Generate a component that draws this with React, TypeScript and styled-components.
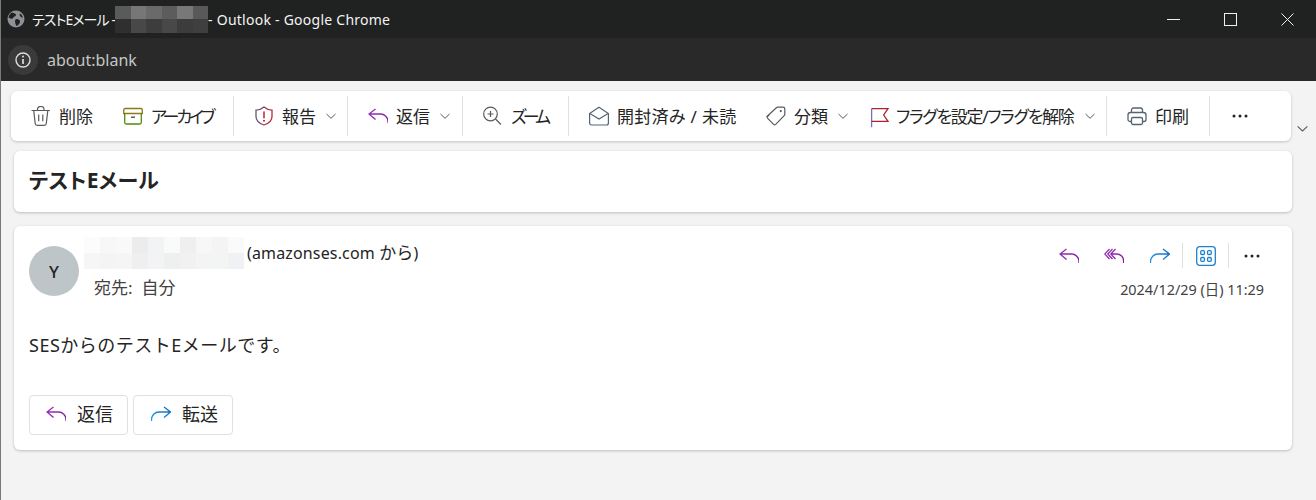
import React from "react";
import styled, { createGlobalStyle } from "styled-components";

const Global = createGlobalStyle`
  html, body { margin: 0; padding: 0; background: #f3f3f3; }
  body { font-family: "Noto Sans", "Noto Sans CJK JP", sans-serif; color: #242424; }
`;

const Page = styled.div`
  width: 1316px;
  height: 500px;
  overflow: hidden;
  background: #f3f3f3;
  border-left: 1px solid #7a7a7a;
  box-sizing: border-box;
  display: flex;
  flex-direction: column;
`;

const TitleBar = styled.div`
  height: 38px;
  flex: none;
  background: #202121;
  display: flex;
  align-items: center;
  color: #f4f4f4;
  font-size: 14px;
  padding-left: 6px;
`;
const TitleText = styled.span<{ $ls: number; $ml: number }>`
  margin-left: ${(p) => p.$ml}px;
  white-space: nowrap;
  font-feature-settings: "palt";
  letter-spacing: ${(p) => p.$ls}px;
`;
const Mosaic = styled.div<{ $cols: number; $cw: number; $ch: number }>`
  display: grid;
  grid-template-columns: repeat(${(p) => p.$cols}, ${(p) => p.$cw}px);
  grid-auto-rows: ${(p) => p.$ch}px;
  flex: none;
`;
const Cell = styled.div<{ $c: string }>`
  background: ${(p) => p.$c};
`;
const WindowButtons = styled.div`
  margin-left: auto;
  display: flex;
  align-items: center;
`;
const WindowButton = styled.div`
  width: 57px;
  height: 38px;
  display: flex;
  align-items: center;
  justify-content: center;
`;

const AddressBar = styled.div`
  height: 43px;
  flex: none;
  background: #292929;
  display: flex;
  align-items: center;
  padding-left: 7px;
  color: #c4c7c5;
  font-size: 16px;
`;
const InfoChip = styled.div`
  width: 30px;
  height: 30px;
  border-radius: 50%;
  background: #3a3a3a;
  display: flex;
  align-items: center;
  justify-content: center;
  margin-right: 9px;
`;

const ToolbarRow = styled.div`
  display: flex;
  align-items: flex-start;
  margin: 10px 0 0 10px;
`;
const Toolbar = styled.div`
  width: 1280px;
  height: 50px;
  box-sizing: border-box;
  background: #fff;
  border-radius: 6px;
  box-shadow: 0 1px 3px rgba(0, 0, 0, 0.2);
  display: flex;
  align-items: center;
  padding-left: 10px;
  font-size: 17px;
  font-feature-settings: "palt";
`;
const Item = styled.div<{ $mr?: number }>`
  display: flex;
  align-items: center;
  padding: 0 10px;
  margin-right: ${(p) => p.$mr ?? 0}px;
  white-space: nowrap;
`;
const IconSlot = styled.span`
  width: 20px;
  height: 20px;
  flex: none;
  display: block;
  margin-right: 8px;
  svg { display: block; }
`;
const Label = styled.span<{ $w: number; $ls?: number }>`
  display: block;
  width: ${(p) => p.$w}px;
  margin-top: -2px;
  letter-spacing: ${(p) => p.$ls ?? 0}px;
`;
const Caret = styled.span`
  display: block;
  margin-left: 9px;
  width: 12px;
  height: 12px;
  svg { display: block; }
`;
const Divider = styled.div<{ $mr?: number }>`
  width: 1px;
  height: 40px;
  flex: none;
  background: #e0e0e0;
  margin-right: ${(p) => p.$mr ?? 10}px;
`;
const Overflow = styled.div`
  margin: 31px 0 0 5px;
  svg { display: block; }
`;

const Card = styled.div`
  margin: 0 0 0 13px;
  width: 1278px;
  box-sizing: border-box;
  background: #fff;
  border-radius: 6px;
  box-shadow: 0 1px 3px rgba(0, 0, 0, 0.22);
`;
const SubjectCard = styled(Card)`
  margin-top: 10px;
  height: 61px;
  display: flex;
  align-items: center;
  padding: 0 0 6px 15px;
  font-size: 21px;
  font-weight: 700;
  letter-spacing: 0.3px;
  font-feature-settings: "palt";
`;
const MessageCard = styled(Card)`
  margin-top: 14px;
  height: 224px;
  padding: 11px 15px 0 15px;
  display: flex;
  flex-direction: column;
`;
const Header = styled.div`
  display: flex;
  height: 73px;
  flex: none;
`;
const Avatar = styled.div`
  width: 50px;
  height: 50px;
  margin-top: 9px;
  border-radius: 50%;
  background: #bec5c9;
  flex: none;
  display: flex;
  align-items: center;
  justify-content: center;
  font-size: 17px;
  font-weight: 500;
  color: #242424;
`;
const Who = styled.div`
  margin-left: 5px;
  display: flex;
  flex-direction: column;
`;
const FromLine = styled.div`
  display: flex;
  align-items: center;
  font-size: 16px;
  height: 32px;
  white-space: nowrap;
`;
const FromText = styled.span`
  margin-left: 3px;
  margin-top: -4px;
  letter-spacing: 0.15px;
`;
const FromKana = styled.span`
  font-size: 17px;
`;
const ToLine = styled.div`
  margin: 5px 0 0 10px;
  font-size: 17px;
  height: 28px;
  line-height: 28px;
  color: #424242;
  white-space: nowrap;
`;
const Meta = styled.div`
  margin-left: auto;
  display: flex;
  flex-direction: column;
  align-items: flex-end;
  margin-right: 13px;
`;
const Actions = styled.div`
  display: flex;
  align-items: center;
  height: 37px;
  margin-right: 2px;
`;
const ActionIcon = styled.div<{ $mr: number }>`
  width: 20px;
  height: 20px;
  display: flex;
  align-items: center;
  justify-content: center;
  margin-right: ${(p) => p.$mr}px;
  svg { display: block; }
`;
const ActionDivider = styled.div<{ $mr: number }>`
  width: 1px;
  height: 25px;
  background: #e0e0e0;
  margin-right: ${(p) => p.$mr}px;
`;
const DateText = styled.div`
  font-size: 14.4px;
  color: #424242;
  margin-top: 4px;
  white-space: nowrap;
`;
const Body = styled.div`
  font-size: 18px;
  letter-spacing: 0.5px;
  margin-top: 23px;
  height: 24px;
  line-height: 24px;
  white-space: nowrap;
`;
const Replies = styled.div`
  display: flex;
  gap: 5px;
  margin-top: 38px;
`;
const ReplyButton = styled.div<{ $w: number; $pl: number }>`
  width: ${(p) => p.$w}px;
  height: 40px;
  box-sizing: border-box;
  border: 1px solid #e0e0e0;
  border-radius: 4px;
  background: #fff;
  display: flex;
  align-items: center;
  padding-left: ${(p) => p.$pl}px;
  gap: 10px;
  font-size: 18px;
  svg { display: block; margin-bottom: 2px; }
`;
const ReplyLabel = styled.span`
  margin: -4px 0 0 1px;
`;

const Grad = () => (
  <svg width="0" height="0" style={{ position: "absolute" }}>
    <defs>
      <linearGradient id="shieldG" x1="0" x2="1" y1="0" y2="0">
        <stop offset="0" stopColor="#5f5a78" />
        <stop offset="1" stopColor="#c0243c" />
      </linearGradient>
      <linearGradient id="replyG" x1="0" x2="1" y1="0" y2="1">
        <stop offset="0" stopColor="#9b35b8" />
        <stop offset="1" stopColor="#7a1a98" />
      </linearGradient>
      <linearGradient id="fwdG" x1="0" x2="1" y1="1" y2="0">
        <stop offset="0" stopColor="#1a9af0" />
        <stop offset="1" stopColor="#1668b8" />
      </linearGradient>
    </defs>
  </svg>
);

const Trash = () => (
  <svg width="20" height="20" viewBox="0 0 20 20" fill="none" stroke="#5a5a5a" strokeWidth="1.200">
    <path d="M0.500 4.500h18.500M6.500 4.500V3.200a3 2.600 0 0 1 6.500 0v1.300M2.700 4.500l1.500 13a2 2 0 0 0 2 1.800h7.100a2 2 0 0 0 2-1.800l1.500-13" />
    <path d="M7.700 8.500v6.800M11.800 8.500v6.800" />
  </svg>
);
const Archive = () => (
  <svg width="20" height="20" viewBox="0 0 20 20" fill="none" strokeWidth="1.300">
    <path d="M.7 7.500V4a1.500 1.500 0 0 1 1.500-1.500h15.600A1.500 1.500 0 0 1 19.300 4v3.500z" stroke="#8a7a16" />
    <path d="M1.700 7.500v9a1.500 1.500 0 0 0 1.500 1.500h13.600a1.500 1.500 0 0 0 1.500-1.500v-9" stroke="#4f8a10" />
    <path d="M8 11.200h4" stroke="#424242" />
  </svg>
);
const Shield = () => (
  <svg width="20" height="20" viewBox="0 0 20 20" fill="none" strokeWidth="1.300">
    <path d="M10 1c2.200 1.900 5 3 8 3.100v6.400c0 3.900-2.700 6.800-8 8.500-5.300-1.700-8-4.600-8-8.500V4.100c3 0 5.800-1.200 8-3.100z" stroke="url(#shieldG)" />
    <path d="M10 5.500v6.800" stroke="#b4233a" strokeWidth="1.500" />
    <circle cx="10" cy="14.700" r="1" fill="#b4233a" />
  </svg>
);
const ReplyIcon = () => (
  <svg width="20" height="20" viewBox="0 -2.500 20 20" fill="none" stroke="url(#replyG)" strokeWidth="1.300">
    <path d="M7.500 .5 1 5.500l6.500 5.500M1 5.500h11.500a7.500 7.500 0 0 1 7.500 7.500v1.500" />
  </svg>
);
const ReplyAllIcon = () => (
  <svg width="20" height="20" viewBox="0 -2.500 20 20" fill="none" stroke="url(#replyG)" strokeWidth="1.300">
    <path d="M5.500 .5 .8 5.500l4.700 5M8.500 .5 3.800 5.500l4.700 5M11.500 .5 6.800 5.500l4.700 5M6.800 5.500h6a6.800 6.800 0 0 1 6.800 6.800v2.200" />
  </svg>
);
const ForwardIcon = () => (
  <svg width="20" height="20" viewBox="0 -2.500 20 20" fill="none" stroke="url(#fwdG)" strokeWidth="1.300">
    <path d="M13 .5 19.500 5.500 13 11M19.500 5.500H8A7.500 7.500 0 0 0 .5 13v1.500" />
  </svg>
);
const Zoom = () => (
  <svg width="20" height="20" viewBox="0 0 20 20" fill="none" stroke="#5a5a5a" strokeWidth="1.200">
    <circle cx="7.500" cy="8" r="6.800" />
    <path d="M12.500 13 18 18.500M7.500 5v6M4.500 8h6" />
  </svg>
);
const Envelope = () => (
  <svg width="20" height="20" viewBox="0 0 20 20" fill="none" stroke="#566574" strokeWidth="1.200">
    <path d="M.6 7.500 10 1.200l9.400 6.300v9.500a2 2 0 0 1-2 2H2.600a2 2 0 0 1-2-2z" />
    <path d="M.9 7.500 10 13l9.100-5.500" />
  </svg>
);
const Tag = () => (
  <svg width="20" height="20" viewBox="0 0 20 20" fill="none" stroke="#5a5a5a" strokeWidth="1.200">
    <path d="M1.200 10.200 10.400 1.700a2 2 0 0 1 1.300-.5h5.300a1.800 1.800 0 0 1 1.800 1.800v5.200a2 2 0 0 1-.6 1.400l-8.500 8.800a1.500 1.500 0 0 1-2.100 0l-5.900-6a1.400 1.400 0 0 1 .1-2.200z" />
    <circle cx="14.800" cy="5.100" r="1.100" fill="#5a5a5a" stroke="none" />
  </svg>
);
const Flag = () => (
  <svg width="22" height="22" viewBox="0 0 22 22" fill="none" strokeWidth="1.300">
    <path d="M3.600 2.700v18.500" stroke="#7d6fb5" />
    <path d="M3.600 2.700h16.400l-4.300 6.300 4.300 6.300H3.600" stroke="#a8232f" />
  </svg>
);
const Printer = () => (
  <svg width="20" height="20" viewBox="0 0 20 20" fill="none" stroke="#566370" strokeWidth="1.300">
    <path d="M4.500 6.500V4a2 2 0 0 1 2-2h7a2 2 0 0 1 2 2v2.500" />
    <path d="M4.500 15.500H3a2 2 0 0 1-2-2V9a2.500 2.500 0 0 1 2.500-2.500h13A2.500 2.500 0 0 1 19 9v4.500a2 2 0 0 1-2 2h-1.500" />
    <rect x="4.500" y="11.500" width="11" height="7" rx="1.500" />
  </svg>
);
const Dots = () => (
  <svg width="16" height="4" viewBox="0 0 16 4" fill="#242424">
    <circle cx="2" cy="2" r="1.500" />
    <circle cx="8" cy="2" r="1.500" />
    <circle cx="14" cy="2" r="1.500" />
  </svg>
);
const ChevronDown = ({ c = "#5a5a5a", s = 12 }: { c?: string; s?: number }) => (
  <svg width={s} height={s} viewBox="0 0 12 12" fill="none" stroke={c} strokeWidth="1">
    <path d="M1.500 4 6 8.300 10.500 4" />
  </svg>
);
const AppsIcon = () => (
  <svg width="20" height="20" viewBox="0 0 20 20" fill="none" stroke="#1f80d0" strokeWidth="1.300">
    <rect x="0.700" y="0.700" width="18.600" height="18.600" rx="3" />
    <rect x="4.700" y="4.700" width="3.800" height="3.800" rx="1.200" />
    <rect x="11.500" y="4.700" width="3.800" height="3.800" rx="1.200" />
    <rect x="4.700" y="11.500" width="3.800" height="3.800" rx="1.200" />
    <rect x="11.500" y="11.500" width="3.800" height="3.800" rx="1.200" />
  </svg>
);
const Globe = () => (
  <svg width="18" height="18" viewBox="0 0 18 18">
    <circle cx="9" cy="9" r="8.500" fill="#8e9296" />
    <path d="M5 2.500c2 .5 4 1 4 2.500s-2.500 1.500-3 3-3 .500-4.500-.500C2 5 3.500 3.500 5 2.500zM9.500 9c2 0 4 1 3.500 3s-2 3.500-3.500 4c-1-1.500-1.500-3-1.500-4.500S8.500 9 9.500 9z" fill="#202121" />
    <path d="M13 3.500c1.500 1 2.500 2.500 3 4-1 .3-2.500-.5-3-1.500s-.5-2 0-2.500z" fill="#202121" />
  </svg>
);
const Info = () => (
  <svg width="18" height="18" viewBox="0 0 18 18" fill="none" stroke="#dcdcdc" strokeWidth="1.400">
    <circle cx="9" cy="9" r="7" />
    <path d="M9 8v5" strokeWidth="1.700" />
    <circle cx="9" cy="5.500" r="1" fill="#dcdcdc" stroke="none" />
  </svg>
);

const titleMosaic = [
  "#5a5a5a", "#777777", "#6a6a6a", "#5c5c5c", "#787878", "#595959",
  "#2f2f2f", "#484848", "#3d3d3d", "#484848", "#3c3c3c", "#3f3f3f",
];
const fromMosaic = [
  "#fcfcfc", "#f7f7f7", "#f9f9f9", "#ececec", "#f2f3f5", "#f9fbfb", "#efefef", "#f7f7f7", "#f4f4f4", "#fafafa",
  "#f6f6f6", "#f4f4f4", "#f5f5f5", "#efefef", "#f3f3f5", "#eef0f0", "#f1f1f1", "#f4f4f4", "#f3f4f4", "#f0f1f4",
];

const tools: Array<
  | { kind: "d"; mr?: number }
  | { kind: "i"; icon: React.ReactNode; text: string; w: number; ls?: number; caret?: boolean; mr?: number }
> = [
  { kind: "i", icon: <Trash />, text: "削除", w: 34, mr: 10 },
  { kind: "i", icon: <Archive />, text: "アーカイブ", w: 63, ls: -3.1, mr: 9 },
  { kind: "d" },
  { kind: "i", icon: <Shield />, text: "報告", w: 34, caret: true },
  { kind: "d" },
  { kind: "i", icon: <ReplyIcon />, text: "返信", w: 34, caret: true, mr: 1 },
  { kind: "d" },
  { kind: "i", icon: <Zoom />, text: "ズーム", w: 38, ls: -3.9, mr: 9 },
  { kind: "d" },
  { kind: "i", icon: <Envelope />, text: "開封済み / 未読", w: 119, ls: 0.3, mr: 10 },
  { kind: "i", icon: <Tag />, text: "分類", w: 34, caret: true, mr: -1 },
  { kind: "i", icon: <Flag />, text: "フラグを設定/フラグを解除", w: 179, ls: -1.3, caret: true },
  { kind: "d" },
  { kind: "i", icon: <Printer />, text: "印刷", w: 34, mr: 10 },
  { kind: "d", mr: 12 },
];

export default function App() {
  return (
    <Page>
      <Global />
      <Grad />
      <TitleBar>
        <Globe />
        <TitleText $ls={-0.9} $ml={7}>テストEメール -</TitleText>
        <Mosaic $cols={6} $cw={15.5} $ch={13.5}>
          {titleMosaic.map((c, i) => (
            <Cell key={i} $c={c} />
          ))}
        </Mosaic>
        <TitleText $ls={0.25} $ml={0}>- Outlook - Google Chrome</TitleText>
        <WindowButtons>
          <WindowButton>
            <svg width="13" height="13" viewBox="0 0 13 13" stroke="#f0f0f0" strokeWidth="1">
              <path d="M0 6.500h13" />
            </svg>
          </WindowButton>
          <WindowButton>
            <svg width="13" height="13" viewBox="0 0 13 13" fill="none" stroke="#f0f0f0" strokeWidth="1">
              <rect x="0.500" y="0.500" width="12" height="12" />
            </svg>
          </WindowButton>
          <WindowButton>
            <svg width="13" height="13" viewBox="0 0 13 13" fill="none" stroke="#f0f0f0" strokeWidth="1">
              <path d="M0.500 0.500l12 12M12.500 0.500l-12 12" />
            </svg>
          </WindowButton>
        </WindowButtons>
      </TitleBar>
      <AddressBar>
        <InfoChip>
          <Info />
        </InfoChip>
        about:blank
      </AddressBar>
      <ToolbarRow>
        <Toolbar>
          {tools.map((t, i) =>
            t.kind === "d" ? (
              <Divider key={i} $mr={t.mr} />
            ) : (
              <Item key={i} $mr={t.mr}>
                <IconSlot>{t.icon}</IconSlot>
                <Label $w={t.w} $ls={t.ls}>{t.text}</Label>
                {t.caret && (
                  <Caret>
                    <ChevronDown />
                  </Caret>
                )}
              </Item>
            )
          )}
          <Item>
            <Dots />
          </Item>
        </Toolbar>
        <Overflow>
          <ChevronDown s={13} />
        </Overflow>
      </ToolbarRow>
      <SubjectCard>テストEメール</SubjectCard>
      <MessageCard>
        <Header>
          <Avatar>Y</Avatar>
          <Who>
            <FromLine>
              <Mosaic $cols={10} $cw={16} $ch={16}>
                {fromMosaic.map((c, i) => (
                  <Cell key={i} $c={c} />
                ))}
              </Mosaic>
              <FromText>
                (amazonses.com <FromKana>から</FromKana>)
              </FromText>
            </FromLine>
            <ToLine>宛先:&nbsp; 自分</ToLine>
          </Who>
          <Meta>
            <Actions>
              <ActionIcon $mr={25}>
                <ReplyIcon />
              </ActionIcon>
              <ActionIcon $mr={26}>
                <ReplyAllIcon />
              </ActionIcon>
              <ActionIcon $mr={12}>
                <ForwardIcon />
              </ActionIcon>
              <ActionDivider $mr={13} />
              <ActionIcon $mr={12}>
                <AppsIcon />
              </ActionIcon>
              <ActionDivider $mr={13} />
              <ActionIcon $mr={0}>
                <Dots />
              </ActionIcon>
            </Actions>
            <DateText>2024/12/29 (日) 11:29</DateText>
          </Meta>
        </Header>
        <Body>SESからのテストEメールです。</Body>
        <Replies>
          <ReplyButton $w={99} $pl={16}>
            <ReplyIcon />
            <ReplyLabel>返信</ReplyLabel>
          </ReplyButton>
          <ReplyButton $w={100} $pl={17}>
            <ForwardIcon />
            <ReplyLabel>転送</ReplyLabel>
          </ReplyButton>
        </Replies>
      </MessageCard>
    </Page>
  );
}
